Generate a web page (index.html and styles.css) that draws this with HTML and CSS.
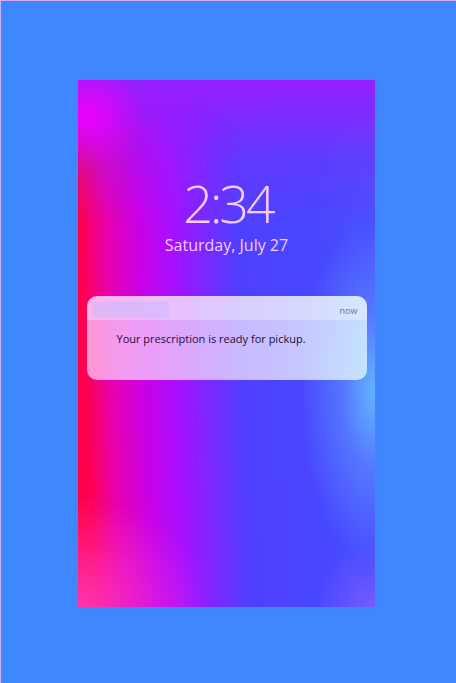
FILE: index.html
```html
<!DOCTYPE html>
<html>
<head>
<meta charset="utf-8">
<link rel="stylesheet" href="styles.css">
</head>
<body>
<div class="stage">
  <div class="phone">
    <div class="clock">
      <div class="time">2:34</div>
      <div class="date">Saturday, July 27</div>
    </div>
    <div class="notif">
      <div class="notif-head">
        <div class="app-pill"></div>
        <span class="when">now</span>
      </div>
      <div class="notif-body">Your prescription is ready for pickup.</div>
    </div>
  </div>
</div>
</body>
</html>
```

FILE: styles.css
```css
html, body {
  margin: 0;
  padding: 0;
  background: #3f87ff;
}
.stage {
  width: 456px;
  height: 683px;
  box-sizing: border-box;
  padding: 79px 0 0 77px;
  border-top: 1px solid #d9a8ff;
  border-left: 1px solid #c8b0ff;
}
.phone {
  width: 297px;
  height: 527px;
  box-sizing: border-box;
  display: flex;
  flex-direction: column;
  align-items: center;
  background:
    radial-gradient(ellipse 55px 55px at 3% 7%, rgba(235, 0, 255, 1), rgba(235, 0, 255, 0) 100%),
    linear-gradient(180deg, rgba(150, 32, 255, 1) 0%, rgba(145, 32, 255, 0.75) 6%, rgba(140, 35, 255, 0.35) 14%, rgba(130, 40, 255, 0) 27%),
    radial-gradient(ellipse 75px 175px at 100% 59%, rgba(100, 180, 255, 1), rgba(100, 180, 255, 0.4) 45%, rgba(100, 180, 255, 0) 100%),
    radial-gradient(ellipse 130px 110px at 0% 100%, rgba(255, 70, 210, 0.75), rgba(255, 70, 210, 0) 100%),
    radial-gradient(ellipse 60px 60px at 100% 100%, rgba(150, 100, 255, 0.6), rgba(150, 100, 255, 0) 100%),
    linear-gradient(88deg, #ff0048 0%, #ff0050 5%, #e800ac 13%, #c800e8 24%, #a610ff 34%, #7a28ff 44%, #5040ff 55%, #4848ff 80%, #4a50ff 100%);
  box-shadow: 0 0 2px rgba(120, 110, 255, 0.8);
}
.clock {
  margin-top: 95px;
  display: flex;
  flex-direction: column;
  align-items: center;
  color: #f6ccff;
  font-family: "Open Sans", sans-serif;
}
.time {
  font-size: 52px;
  font-weight: 300;
  line-height: 56px;
  letter-spacing: -3px;
  padding-left: 3px;
}
.date {
  font-size: 16px;
  line-height: 20px;
  margin-top: 4px;
}
.notif {
  margin-top: 41px;
  width: 280px;
  height: 84px;
  box-sizing: border-box;
  border-radius: 10px;
  background: linear-gradient(90deg, rgba(255, 200, 250, 0.75) 0%, rgba(235, 215, 255, 0.78) 50%, rgba(215, 240, 255, 0.85) 100%);
  font-family: "Open Sans", sans-serif;
  overflow: hidden;
}
.notif-head {
  height: 24px;
  display: flex;
  align-items: center;
  justify-content: space-between;
  padding: 0 9px 0 5px;
  background: rgba(255, 255, 255, 0.3);
}
.app-pill {
  width: 77px;
  height: 17px;
  margin-top: 2px;
  background: rgba(205, 185, 255, 0.6);
}
.when {
  font-size: 9px;
  color: #7a6a9a;
  margin-top: 4px;
}
.notif-body {
  padding: 11px 0 0 30px;
  font-size: 11px;
  color: #1a1030;
}
```
